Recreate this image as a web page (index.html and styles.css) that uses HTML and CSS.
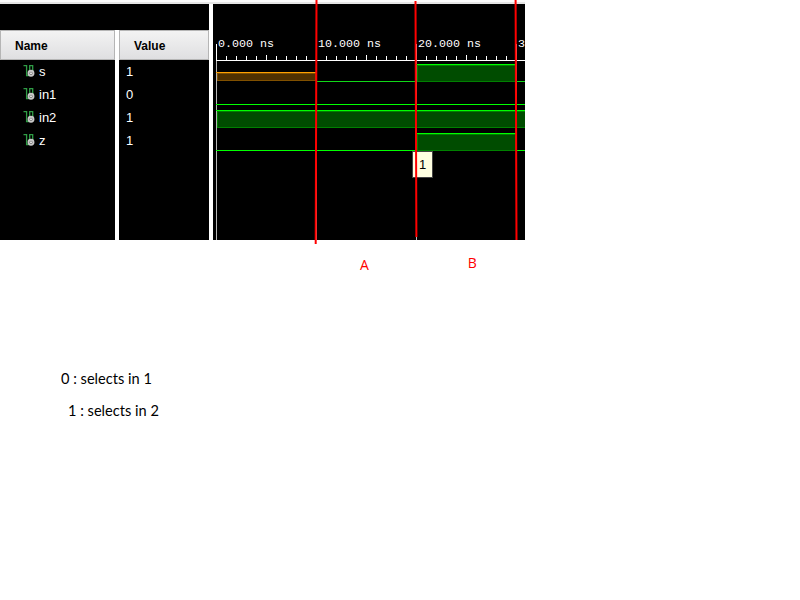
FILE: index.html
```
<!DOCTYPE html>
<html lang="en">
<head>
<meta charset="utf-8">
<title>Waveform</title>
<link rel="stylesheet" href="styles.css">
</head>
<body>
<svg class="defs" width="0" height="0">
  <symbol id="signal" viewBox="0 0 12 13">
    <path d="M0.500 0.700H3.600V10.500H6M6.700 7V0.700H9.700V6" fill="none" stroke="#2f9c45" stroke-width="1.300"/>
    <circle cx="8" cy="8.200" r="2.500" fill="#555" stroke="#c8c8c8" stroke-width="1.900"/>
    <circle cx="8" cy="8.200" r="1" fill="#eee"/>
  </symbol>
</svg>
<main class="viewer">
  <section class="signals">
    <div class="column names">
      <h2>Name</h2>
      <ul>
        <li><svg class="icon"><use href="#signal"/></svg>s</li>
        <li><svg class="icon"><use href="#signal"/></svg>in1</li>
        <li><svg class="icon"><use href="#signal"/></svg>in2</li>
        <li><svg class="icon"><use href="#signal"/></svg>z</li>
      </ul>
    </div>
    <div class="column values">
      <h2>Value</h2>
      <ul><li>1</li><li>0</li><li>1</li><li>1</li></ul>
    </div>
  </section>
  <svg class="waves" width="312" height="236" viewBox="213 4 312 236" shape-rendering="crispEdges">
    <defs>
      <pattern id="ticks" x="216" y="55" width="100" height="5" patternUnits="userSpaceOnUse">
        <path d="M10.500 1v4M20.500 1v4M30.500 1v4M40.500 1v4M50.500 0v5M60.500 1v4M70.500 1v4M80.500 1v4M90.500 1v4" stroke="#fff"/>
      </pattern>
    </defs>
    <path d="M216.500 60V240M316.500 60V240M416.500 60V240M516.500 60V240" stroke="#b8b8b8"/>
    <path d="M216.500 44V60M316.500 44V60M416.500 44V60M516.500 44V60M216 60.500H525" stroke="#fff"/>
    <rect x="216" y="55" width="309" height="5" fill="url(#ticks)"/>
    <g class="time">
      <text x="218" y="47">0.000 ns</text>
      <text x="318" y="47">10.000 ns</text>
      <text x="418" y="47">20.000 ns</text>
      <text x="518" y="47">3</text>
    </g>
    <rect class="unknown" x="217.500" y="73.500" width="98" height="7"/>
    <path d="M216 72.500H316" stroke="#ffa000"/>
    <rect class="high" x="417.500" y="65.500" width="98" height="16"/>
    <rect class="high" x="217.500" y="111.500" width="310" height="16"/>
    <rect class="high" x="417.500" y="134.500" width="98" height="16"/>
    <path d="M316 81.500H416M516 81.500H525" stroke="#10d818"/>
    <path d="M416 64.500H516M216 104.500H525M216 110.500H525M216 150.500H416M416 133.500H516M516 150.500H525" stroke="#00ff00"/>
  </svg>
  <div class="tooltip">1</div>
  <svg class="markers" width="525" height="245">
    <path d="M316.500 0L315.700 244M415.500 1L416.400 237M515.600 0L516.500 240"/>
  </svg>
</main>
<div class="regions"><span>A</span><span class="second">B</span></div>
<section class="notes">
  <p>0 : selects in 1</p>
  <p class="indented">1 : selects in 2</p>
</section>
</body>
</html>
```
FILE: styles.css
```
* { box-sizing: border-box; }
body { margin: 0; background: #fff; width: 800px; height: 600px; overflow: hidden; font: 13px "Liberation Sans", Arial, sans-serif; }
.defs { position: absolute; }
.viewer { position: relative; display: flex; gap: 4px; width: 525px; height: 240px; padding-top: 4px; background: linear-gradient(#fcfcfc 2px, #e5e5e5 2px, #e5e5e5 4px, #fff 4px); }
.signals { width: 209px; display: flex; gap: 4px; padding-top: 26px; background: linear-gradient(#000 26px, #fff 26px); }
.column { background: #000; color: #fff; }
.names { width: 115px; }
.values { width: 90px; }
h2 { margin: 0; height: 30px; padding-left: 14px; border: 1px solid #b5b5b5; background: linear-gradient(#f3f3f3, #dfdfe1); color: #000; font-size: 12px; line-height: 30px; }
ul { margin: 0; padding: 0; list-style: none; }
li { display: flex; align-items: center; height: 23px; padding-left: 7px; line-height: 23px; }
.names li { padding-left: 23px; gap: 4px; }
.icon { width: 12px; height: 13px; }
.waves { display: block; background: #000; }
.time { fill: #fff; font: 11.660px "Liberation Mono", "Courier New", monospace; }
.unknown { fill: #4f3000; stroke: #805000; }
.high { fill: #004c00; stroke: #008000; }
.tooltip { position: absolute; left: 412px; top: 151px; width: 21px; height: 27px; padding-left: 6px; border: 1px solid #444; background: #ffffe1; line-height: 26px; }
.markers { position: absolute; left: 0; top: 0; fill: none; stroke: #f00; stroke-width: 2; }
.regions { display: flex; gap: 99px; height: 50px; padding: 16px 0 0 360px; color: #f00; font: 14px/18px "Open Sans", sans-serif; }
.second { margin-top: -2px; }
.notes { padding: 80px 0 0 61px; font: 14.600px/18px Lato, "Open Sans", sans-serif; color: #000; }
.notes p { margin: 0 0 14px; }
.notes .indented { padding-left: 7px; }
```
